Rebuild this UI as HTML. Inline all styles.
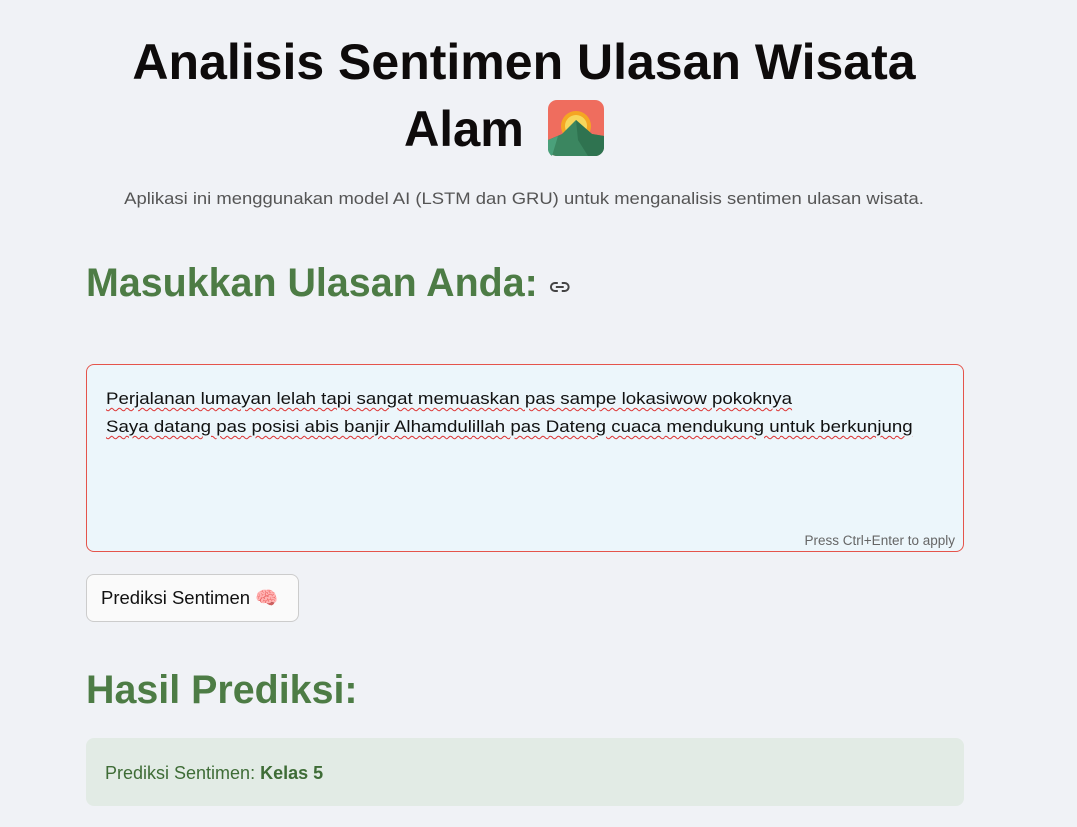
<!DOCTYPE html>
<html><head><meta charset="utf-8"><style>
body{margin:0;background:#f0f2f6;font-family:"Liberation Sans",sans-serif;color:#31333f;width:1077px;height:827px;overflow:hidden;position:relative}
.t{position:absolute;left:0;width:1048px;text-align:center;font-weight:bold;font-size:50px;color:#0e0b0b;white-space:nowrap}
.sub{position:absolute;left:0;width:1048px;top:189px;text-align:center;font-size:17px;color:#555;transform:scaleX(1.085)}
.h{position:absolute;left:86px;font-size:40px;font-weight:bold;color:#4d7c45;transform-origin:left;transform:scaleX(.985);white-space:nowrap}
.ta{position:absolute;left:86px;top:364px;width:878px;height:188px;background:#ecf6fb;border:1px solid #e5544b;border-radius:8px;box-sizing:border-box}
.ta p{margin:0;position:absolute;left:19px;font-size:17px;color:#111;text-decoration:underline wavy #d33 1px;text-underline-offset:3px;white-space:nowrap;transform-origin:left;transform:scaleX(1.1)}
.hint{position:absolute;right:8px;bottom:3px;font-size:13.5px;color:#666}
.btn{position:absolute;left:86px;top:574px;width:213px;height:48px;background:#fafafa;border:1px solid #ccc;border-radius:8px;box-sizing:border-box;font-size:18.5px;line-height:46px;padding-left:14px;color:#111;white-space:nowrap}
.res{position:absolute;left:86px;top:738px;width:878px;height:68px;background:#e2ebe5;border-radius:8px;font-size:18px;color:#3e6c36;line-height:70px;padding-left:19px;box-sizing:border-box}
</style></head><body>
<div class="t" style="top:33px">Analisis Sentimen Ulasan Wisata</div>
<div class="t" style="top:100px;left:404px;width:auto;text-align:left"><span style="display:inline-block;transform-origin:left;transform:scaleX(.98)">Alam</span><svg width="56" height="56" viewBox="0 0 56 56" style="vertical-align:-10px;margin-left:22px"><rect width="56" height="56" rx="9" fill="#ef6d5e"/><circle cx="28" cy="26" r="15" fill="#f5a623"/><circle cx="28" cy="26" r="11" fill="#f7d75b"/><path d="M0 40 L14 34 L28 20 L44 34 L56 36 V47 a9 9 0 0 1-9 9 H9 a9 9 0 0 1-9-9Z" fill="#3b8660"/><path d="M28 20 L44 34 L56 36 V47 a9 9 0 0 1-9 9 H40 L30 40Z" fill="#2f7350"/><path d="M0 40 L10 36 L4 56 A9 9 0 0 1 0 47Z" fill="#4aa07a"/></svg></div>
<div class="sub">Aplikasi ini menggunakan model AI (LSTM dan GRU) untuk menganalisis sentimen ulasan wisata.</div>
<div class="h" style="top:261px">Masukkan Ulasan Anda: <svg width="22" height="14" viewBox="0 0 22 14" style="vertical-align:2px"><path d="M9 3H6a4 4 0 0 0 0 8h3M13 3h3a4 4 0 0 1 0 8h-3M7 7h8" stroke="#444" stroke-width="2" fill="none"/></svg></div>
<div class="ta"><p style="top:24px">Perjalanan lumayan lelah tapi sangat memuaskan pas sampe lokasiwow pokoknya</p><p style="top:52px">Saya datang pas posisi abis banjir Alhamdulillah pas Dateng cuaca mendukung untuk berkunjung</p><div class="hint">Press Ctrl+Enter to apply</div></div>
<div class="btn">Prediksi Sentimen 🧠</div>
<div class="h" style="top:668px">Hasil Prediksi:</div>
<div class="res">Prediksi Sentimen: <b>Kelas 5</b></div>
</body></html>
